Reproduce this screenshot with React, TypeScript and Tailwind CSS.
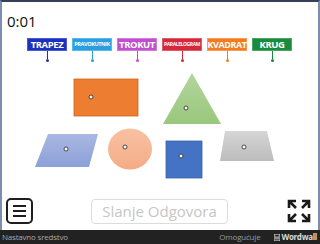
import React from "react";

const labels = [
  { t: "TRAPEZ", c: "#1c30bf", b: "#4a5ad0", fs: "text-[9.5px]" },
  { t: "PRAVOKUTNIK", c: "#2a9fe0", b: "#5cb8ea", fs: "text-[5.5px]" },
  { t: "TROKUT", c: "#c04ecf", b: "#d27ddc", fs: "text-[9.5px]" },
  { t: "PARALELOGRAM", c: "#d6283b", b: "#e45a69", fs: "text-[5px]" },
  { t: "KVADRAT", c: "#f47b1f", b: "#f79b55", fs: "text-[9px]" },
  { t: "KRUG", c: "#1a8a3c", b: "#4aa566", fs: "text-[9.5px]" },
];

function Dot({ x, y }: { x: number; y: number }) {
  return <circle cx={x} cy={y} r={2} fill="#fff" stroke="#333" strokeWidth={0.9} />;
}

export default function App() {
  return (
    <div
      className="w-[320px] h-[244px] flex flex-col overflow-hidden bg-white"
      style={{ fontFamily: '"Open Sans", "Noto Sans", sans-serif' }}
    >
      <div className="h-[230px] flex flex-col border-t-2 border-t-[#34405a] border-l-2 border-r-2 border-l-[#7d8db0] border-r-[#7d8db0] bg-white">
        <div className="pt-[9px] pl-[5px] h-[29px] text-[15px] leading-[20px] text-[#111]">0:01</div>
        <div className="mt-[7px] flex justify-center gap-[5px] pr-[1px]">
          {labels.map((l) => (
            <div key={l.t} className="w-[40px] flex flex-col items-center">
              <div
                className={`w-[40px] h-[13px] flex items-center justify-center border text-white font-bold tracking-[-0.4px] leading-none whitespace-nowrap ${l.fs}`}
                style={{ backgroundColor: l.c, borderColor: l.b }}
              >
                {l.t}
              </div>
              <div className="w-[1px] h-[8px]" style={{ backgroundColor: l.c }} />
              <div className="w-[3px] h-[3px] rounded-full" style={{ backgroundColor: l.c }} />
            </div>
          ))}
        </div>
        <svg width={316} height={120} viewBox="2 62 316 120" className="block">
          <defs>
            <linearGradient id="gTri" x1="0" y1="0" x2="0" y2="1">
              <stop offset="0" stopColor="#b2d69b" />
              <stop offset="1" stopColor="#9ac77d" />
            </linearGradient>
            <linearGradient id="gPar" x1="0" y1="0" x2="0" y2="1">
              <stop offset="0" stopColor="#a9b8e2" />
              <stop offset="1" stopColor="#8ca0d7" />
            </linearGradient>
            <linearGradient id="gCir" x1="0" y1="0" x2="0" y2="1">
              <stop offset="0" stopColor="#f8c2a3" />
              <stop offset="1" stopColor="#f4ab86" />
            </linearGradient>
            <linearGradient id="gTrap" x1="0" y1="0" x2="0" y2="1">
              <stop offset="0" stopColor="#d6d6d6" />
              <stop offset="1" stopColor="#bcbcbc" />
            </linearGradient>
          </defs>
          <rect x={74} y={79} width={64} height={37} fill="#ed7d31" stroke="#c9651f" strokeWidth={0.8} />
          <Dot x={91} y={97} />
          <polygon points="192,73 221,124 163,124" fill="url(#gTri)" />
          <Dot x={186} y={108} />
          <polygon points="48,134 98,134 89,167 35,167" fill="url(#gPar)" />
          <Dot x={66} y={149} />
          <ellipse cx={130} cy={149} rx={22} ry={20.5} fill="url(#gCir)" />
          <Dot x={125} y={147} />
          <rect x={166} y={141} width={36} height={37} fill="#4472c4" stroke="#3c63ab" strokeWidth={0.8} />
          <Dot x={181} y={156} />
          <polygon points="225,131 267,131 274,161 220,161" fill="url(#gTrap)" />
          <Dot x={244} y={147} />
        </svg>
        <div className="mt-[16px] h-[26px] flex items-center pl-[4px] pr-[6px]">
          <div className="w-[27px] h-[26px] rounded-[5px] border-2 border-[#1e1e1e] flex flex-col items-center justify-center gap-[3px]">
            <div className="w-[13px] h-[2px] bg-[#1e1e1e]" />
            <div className="w-[13px] h-[2px] bg-[#1e1e1e]" />
            <div className="w-[13px] h-[2px] bg-[#1e1e1e]" />
          </div>
          <div className="ml-[58px] w-[137px] h-[25px] rounded-[4px] border border-[#dcdcdc] flex items-center justify-center text-[15px] text-[#c6c6c6] leading-none">
            Slanje Odgovora
          </div>
          <div className="ml-auto mr-[1px]">
            <svg width={24} height={24} viewBox="0 0 24 24" fill="none" stroke="#1a1a1a" strokeWidth={2.6} strokeLinecap="butt">
              <path d="M2 9V2h7M2 2l7 7" />
              <path d="M22 9V2h-7M22 2l-7 7" />
              <path d="M2 15v7h7M2 22l7-7" />
              <path d="M22 15v7h-7M22 22l-7-7" />
            </svg>
          </div>
        </div>
      </div>
      <div className="h-[14px] bg-[#222222] flex items-center pl-[2px] pr-[3px] text-[8px] leading-none">
        <span className="text-[#a8a8a8] tracking-[-0.2px]">Nastavno sredstvo</span>
        <span className="ml-auto text-[#9a9a9a] tracking-[-0.2px]">Omogućuje</span>
        <span className="ml-[14px] flex items-center gap-[1px] text-[#dcdcdc] font-bold tracking-[-0.3px]">
          <svg width={6} height={7} viewBox="0 0 6 7">
            <rect x={0.3} y={0.3} width={5.4} height={6.4} fill="none" stroke="#cfcfcf" strokeWidth={0.6} />
            <path d="M1 1.5l1 4 1-3 1 3 1-4" stroke="#cfcfcf" strokeWidth={0.7} fill="none" />
          </svg>
          Wordwall
        </span>
      </div>
    </div>
  );
}
